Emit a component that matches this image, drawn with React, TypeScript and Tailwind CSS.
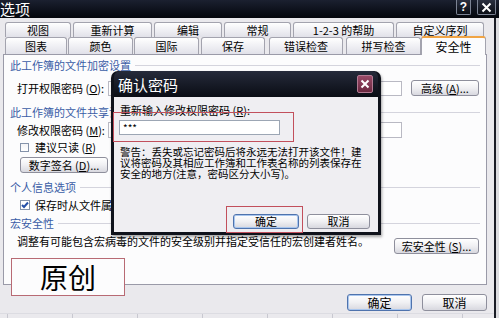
import React from "react";

const F = "font-['Noto_Sans_CJK_SC',sans-serif]";

function Btn({ children, className, primary }: { children: React.ReactNode; className: string; primary?: boolean }) {
  return (
    <div
      className={`flex items-center justify-center rounded-[3px] border bg-linear-to-b from-[#ffffff] via-[#f0f0f3] to-[#d8d8df] text-[11px] leading-none text-black whitespace-nowrap ${
        primary ? "border-[#4f73ad] shadow-[inset_0_0_0_1px_#a9c6ee]" : "border-[#8e8f9c]"
      } ${className}`}
    >
      {children}
    </div>
  );
}

function Tab({ label, className }: { label: React.ReactNode; className: string }) {
  return (
    <div
      className={`h-full flex items-center justify-center border border-b-0 border-[#a3a3ae] rounded-t-[3px] bg-linear-to-b from-white to-[#e1e1e9] text-[11px] leading-none text-black whitespace-nowrap ${className}`}
    >
      {label}
    </div>
  );
}

function GroupLabel({ text, className }: { text: string; className: string }) {
  return (
    <div className={`flex items-center ${className}`}>
      <span className="text-[11px] leading-none text-[#3a5ca6] whitespace-nowrap">{text}</span>
      <div className="flex-1 h-px bg-[#d4d4dd] ml-[4px]" />
    </div>
  );
}

function Ul({ c }: { c: string }) {
  return <span className="underline">{c}</span>;
}

export default function App() {
  return (
    <div className={`relative w-[499px] h-[318px] overflow-hidden bg-[#eae9ed] flex flex-col ${F}`}>
      {/* main title bar */}
      <div className="h-[18px] flex items-center bg-linear-to-b from-[#1b2030] to-[#05070d]">
        <span className="ml-0 text-[15px] leading-[18px] text-white">选项</span>
        <div className="ml-auto mr-[3px] flex gap-[6px] self-start">
          <div className="w-[15px] h-[15px] rounded-b-[2px] border border-t-0 border-[#7c8394] bg-linear-to-b from-[#2a3040] to-[#0b0e16] flex items-center justify-center text-white text-[12px] font-bold leading-none font-['Liberation_Sans',sans-serif]">?</div>
          <div className="w-[19px] h-[15px] rounded-b-[2px] border border-t-0 border-[#7c8394] bg-linear-to-b from-[#2a3040] to-[#0b0e16] flex items-center justify-center">
            <svg width="11" height="11" viewBox="0 0 11 11">
              <path d="M1.5 1.5 L9.5 9.5 M9.5 1.5 L1.5 9.5" stroke="white" strokeWidth="2" />
            </svg>
          </div>
        </div>
      </div>

      <div className="flex flex-1">
        <div className="w-[494px] flex flex-col">
          {/* tabs row 1 */}
          <div className="mt-[4px] h-[15px] flex">
            <Tab label="视图" className="ml-[5px] w-[66px]" />
            <Tab label="重新计算" className="ml-[2px] w-[79px]" />
            <Tab label="编辑" className="ml-[2px] w-[68px]" />
            <Tab label="常规" className="ml-[2px] w-[67px]" />
            <Tab label="1-2-3 的帮助" className="ml-[2px] w-[101px]" />
            <Tab label="自定义序列" className="ml-[2px] w-[88px]" />
          </div>
          {/* tabs row 2 */}
          <div className="h-[17px] flex items-end">
            <Tab label="图表" className="ml-[5px] w-[62px]" />
            <Tab label="颜色" className="ml-[1px] w-[65px]" />
            <Tab label="国际" className="ml-[1px] w-[65px]" />
            <Tab label="保存" className="ml-[2px] w-[64px]" />
            <Tab label="错误检查" className="ml-[4px] w-[74px]" />
            <Tab label="拼写检查" className="ml-[3px] w-[75px]" />
            <div className="relative z-10 w-[65px] h-[19px] -mb-[1px] flex items-center justify-center border border-b-0 border-[#a3a3ae] border-t-2 border-t-[#f0a445] rounded-t-[3px] bg-[#fcfcfd] text-[12px] leading-none text-black">
              安全性
            </div>
          </div>

          {/* panel */}
          <div className="ml-[3px] w-[484px] h-[231px] border border-[#9a9aa8] bg-[#fcfcfd] flex flex-col pl-[6px] pr-[6px]">
            <GroupLabel text="此工作簿的文件加密设置" className="h-[20px]" />
            <div className="mt-[2px] h-[22px] flex items-center pl-[7px]">
              <span className="w-[91px] text-[11px] leading-none text-black whitespace-nowrap">
                打开权限密码 (<Ul c="O" />):
              </span>
              <div className="w-[294px] h-[15px] border border-[#b9b9c3] bg-white" />
              <Btn className="ml-[9px] w-[68px] h-[16px]">
                高级 (<Ul c="A" />)...
              </Btn>
            </div>
            <GroupLabel text="此工作簿的文件共享设置" className="mt-[4px] h-[18px]" />
            <div className="h-[18px] flex items-center pl-[7px]">
              <span className="w-[91px] text-[11px] leading-none text-black whitespace-nowrap">
                修改权限密码 (<Ul c="M" />):
              </span>
              <div className="w-[294px] h-[16px] border border-[#b9b9c3] bg-white" />
            </div>
            <div className="h-[16px] flex items-center pl-[10px]">
              <div className="w-[9px] h-[9px] border border-[#8593aa] bg-linear-to-b from-[#f4f4f6] to-white" />
              <span className="ml-[6px] text-[11px] leading-none text-black whitespace-nowrap">
                建议只读 (<Ul c="R" />)
              </span>
            </div>
            <div className="mt-[2px] h-[16px] flex items-center pl-[10px]">
              <Btn className="w-[88px] h-[16px]">
                数字签名 (<Ul c="D" />)...
              </Btn>
            </div>
            <GroupLabel text="个人信息选项" className="mt-[4px] h-[20px]" />
            <div className="h-[16px] flex items-center pl-[10px]">
              <div className="w-[10px] h-[10px] border border-[#8593aa] bg-white flex items-center justify-center">
                <svg width="8" height="8" viewBox="0 0 8 8">
                  <path d="M1 4 L3 6 L7 1.5" stroke="#2550a8" strokeWidth="2" fill="none" />
                </svg>
              </div>
              <span className="ml-[5px] text-[11px] leading-none text-black whitespace-nowrap">
                保存时从文件属性中删除个人信息(<Ul c="V" />)
              </span>
            </div>
            <GroupLabel text="宏安全性" className="mt-[1px] h-[18px]" />
            <div className="mt-[4px] h-[18px] flex items-start pl-[7px]">
              <span className="text-[11px] leading-[11px] text-black whitespace-nowrap">
                调整有可能包含宏病毒的文件的安全级别并指定受信任的宏创建者姓名。
              </span>
              <Btn className="ml-auto mr-[1px] mt-[2px] w-[85px] h-[16px]">
                宏安全性 (<Ul c="S" />)...
              </Btn>
            </div>
          </div>

          {/* bottom buttons */}
          <div className="mt-[9px] h-[17px] flex justify-end gap-[10px] pr-[7px]">
            <Btn primary className="w-[65px] h-[17px] text-[12px]">确定</Btn>
            <Btn className="w-[65px] h-[17px] text-[12px]">取消</Btn>
          </div>
          <div className="mt-[2px] h-[5px] flex pl-[7px] border-t border-[#dcdce2]">
            <div className="w-[65px] h-full border-l border-[#c8c8d0]" />
            <div className="w-[65px] h-full border-l border-[#c8c8d0]" />
            <div className="w-[65px] h-full border-l border-[#c8c8d0]" />
            <div className="w-[65px] h-full border-l border-[#c8c8d0]" />
            <div className="w-[65px] h-full border-l border-[#c8c8d0]" />
            <div className="w-[65px] h-full border-l border-[#c8c8d0]" />
            <div className="w-[65px] h-full border-l border-[#c8c8d0]" />
            <div className="w-[25px] h-full border-l border-[#c8c8d0]" />
          </div>
        </div>
        <div className="w-[2px] bg-[#1a1d26]" />
        <div className="w-[3px] bg-[#dcdce0]" />
      </div>

      {/* confirm password dialog */}
      <div className="absolute left-[111px] top-[71px] w-[270px] h-[164px] rounded-t-[7px] bg-[#0f121b] flex flex-col px-[3px] pb-[3px] shadow-[1px_2px_3px_rgba(0,0,0,0.35)]">
        <div className="h-[26px] flex items-center rounded-t-[6px] bg-linear-to-b from-[#262b3b] to-[#0a0d15]">
          <span className="ml-[4px] text-[15px] leading-none text-white">确认密码</span>
          <div className="ml-auto mr-[5px] w-[16px] h-[18px] rounded-[2px] border border-[#b27a92] bg-linear-to-b from-[#9a4a68] to-[#6a2840] flex items-center justify-center">
            <svg width="10" height="10" viewBox="0 0 10 10">
              <path d="M1.5 1.5 L8.5 8.5 M8.5 1.5 L1.5 8.5" stroke="white" strokeWidth="2" />
            </svg>
          </div>
        </div>
        <div className="flex-1 bg-[#efeef2] flex flex-col pl-[5px] pt-[7px]">
          <span className="ml-[1px] text-[11px] leading-[12px] text-black whitespace-nowrap">
            重新输入修改权限密码 (<Ul c="R" />):
          </span>
          <div className="mt-[4px] w-[161px] h-[15px] border border-[#9ca6b4] bg-white flex items-center pl-[3px] text-[10px] leading-none text-black">
            ***
          </div>
          <div className="mt-[11px] ml-[1px] text-[10.5px] leading-[11px] text-black whitespace-nowrap">
            <div>警告：丢失或忘记密码后将永远无法打开该文件！建</div>
            <div>议将密码及其相应工作簿和工作表名称的列表保存在</div>
            <div>安全的地方(注意，密码区分大小写)。</div>
          </div>
          <div className="mt-[35px] flex justify-end gap-[8px] pr-[8px]">
            <Btn primary className="w-[66px] h-[15px]">确定</Btn>
            <Btn className="w-[63px] h-[15px]">取消</Btn>
          </div>
        </div>
      </div>

      {/* red annotation rectangles */}
      <div className="absolute left-[113px] top-[112px] w-[181px] h-[30px] border border-[#c24f5c]" />
      <div className="absolute left-[226px] top-[206px] w-[77px] h-[27px] border border-[#c24f5c]" />

      {/* watermark */}
      <div className="absolute left-[11px] top-[258px] w-[114px] h-[38px] border border-[#b86a74] bg-[#fcfcfd] flex items-center justify-center text-[28px] leading-none text-black">
        原创
      </div>
    </div>
  );
}
